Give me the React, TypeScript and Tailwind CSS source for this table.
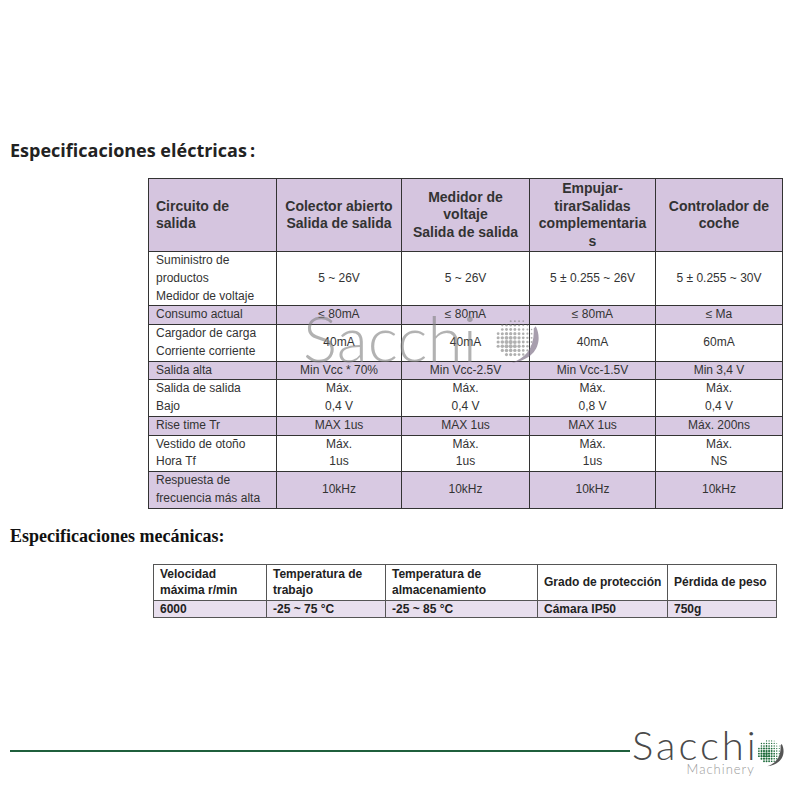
import React from "react";

type Cell = string[];

const elecHeader: Cell[] = [
  ["Circuito de", "salida"],
  ["Colector abierto", "Salida de salida"],
  ["Medidor de", "voltaje", "Salida de salida"],
  ["Empujar-", "tirarSalidas", "complementaria", "s"],
  ["Controlador de", "coche"],
];

const elecRows: { label: string[]; values: string[][]; tint: boolean }[] = [
  {
    label: ["Suministro de", "productos", "Medidor de voltaje"],
    values: [["5 ~ 26V"], ["5 ~ 26V"], ["5 ± 0.255 ~ 26V"], ["5 ± 0.255 ~ 30V"]],
    tint: false,
  },
  {
    label: ["Consumo actual"],
    values: [["≤ 80mA"], ["≤ 80mA"], ["≤ 80mA"], ["≤ Ma"]],
    tint: true,
  },
  {
    label: ["Cargador de carga", "Corriente corriente"],
    values: [["40mA"], ["40mA"], ["40mA"], ["60mA"]],
    tint: false,
  },
  {
    label: ["Salida alta"],
    values: [["Min Vcc * 70%"], ["Min Vcc-2.5V"], ["Min Vcc-1.5V"], ["Min 3,4 V"]],
    tint: true,
  },
  {
    label: ["Salida de salida", "Bajo"],
    values: [["Máx.", "0,4 V"], ["Máx.", "0,4 V"], ["Máx.", "0,8 V"], ["Máx.", "0,4 V"]],
    tint: false,
  },
  {
    label: ["Rise time Tr"],
    values: [["MAX 1us"], ["MAX 1us"], ["MAX 1us"], ["Máx. 200ns"]],
    tint: true,
  },
  {
    label: ["Vestido de otoño", "Hora Tf"],
    values: [["Máx.", "1us"], ["Máx.", "1us"], ["Máx.", "1us"], ["Máx.", "NS"]],
    tint: false,
  },
  {
    label: ["Respuesta de", "frecuencia más alta"],
    values: [["10kHz"], ["10kHz"], ["10kHz"], ["10kHz"]],
    tint: true,
  },
];

const mechHeader = [
  ["Velocidad", "máxima r/min"],
  ["Temperatura de", "trabajo"],
  ["Temperatura de", "almacenamiento"],
  ["Grado de protección"],
  ["Pérdida de peso"],
];
const mechValues = ["6000", "-25 ~ 75 °C", "-25 ~ 85 °C", "Cámara IP50", "750g"];

function Lines({ lines }: { lines: string[] }) {
  return (
    <>
      {lines.map((l, i) => (
        <div key={i}>{l}</div>
      ))}
    </>
  );
}

// halftone ball used in the Sacchi logo
function HalftoneBall({ dot, swoosh, size }: { dot: string; swoosh: string; size: number }) {
  const dots: { x: number; y: number; r: number }[] = [];
  for (let y = 3; y < 40; y += 4) {
    for (let x = 3; x < 40; x += 4) {
      const dx = x - 20;
      const dy = y - 20;
      if (dx * dx + dy * dy > 18.5 * 18.5) continue;
      const d = Math.sqrt((x - 14) * (x - 14) + (y - 24) * (y - 24));
      const r = Math.max(0.7, 2.1 - d * 0.055);
      dots.push({ x, y, r });
    }
  }
  return (
    <svg width={size} height={size} viewBox="0 0 44 44" className="block">
      {dots.map((p, i) => (
        <circle key={i} cx={p.x} cy={p.y} r={p.r} fill={dot} />
      ))}
      <path d="M39 8 C46 22 40 40 16 43 C30 38 38 28 37 10 Z" fill={swoosh} />
    </svg>
  );
}

export default function App() {
  return (
    <div className="relative h-[800px] w-[800px] overflow-hidden bg-white text-[#333]">
      <h2 className="ml-[10px] pt-[136px] font-['Open_Sans',sans-serif] text-[18px] font-bold leading-[28px] text-[#222]">
        Especificaciones eléctricas<span className="ml-[3px]">:</span>
      </h2>

      <table className="ml-[148px] mt-[14px] w-[634px] table-fixed border-collapse font-['Liberation_Sans',Arial,sans-serif] text-[12px] leading-[17.75px]">
        <colgroup>
          <col className="w-[128px]" />
          <col className="w-[125px]" />
          <col className="w-[128px]" />
          <col className="w-[126px]" />
          <col className="w-[127px]" />
        </colgroup>
        <thead>
          <tr className="h-[73px] bg-[#d5c5df]">
            {elecHeader.map((h, i) => (
              <th
                key={i}
                className={`border border-[#333] px-[4px] align-middle text-[14px] font-bold leading-[17.5px] text-[#333] ${
                  i === 0 ? "pl-[7px] text-left" : "text-center"
                }`}
              >
                <Lines lines={h} />
              </th>
            ))}
          </tr>
        </thead>
        <tbody>
          {elecRows.map((row, ri) => (
            <tr key={ri} className={row.tint ? "bg-[#d8c9e2]" : "bg-white"}>
              <td className="border border-[#333] px-[7px] py-0 text-left align-middle">
                <Lines lines={row.label} />
              </td>
              {row.values.map((v, vi) => (
                <td key={vi} className="border border-[#333] px-[4px] py-0 text-center align-middle">
                  <Lines lines={v} />
                </td>
              ))}
            </tr>
          ))}
        </tbody>
      </table>

      <h2 className="ml-[10px] mt-[15px] font-['Liberation_Serif',serif] text-[18px] font-bold leading-[24px] text-[#111]">
        Especificaciones mecánicas:
      </h2>

      <table className="ml-[153px] mt-[16px] w-[623px] table-fixed border-collapse font-['Liberation_Sans',Arial,sans-serif] text-[12px] font-bold leading-[16px] text-[#222]">
        <colgroup>
          <col className="w-[113px]" />
          <col className="w-[119px]" />
          <col className="w-[152px]" />
          <col className="w-[130px]" />
          <col className="w-[109px]" />
        </colgroup>
        <tbody>
          <tr className="h-[36px] bg-white">
            {mechHeader.map((h, i) => (
              <td key={i} className="whitespace-nowrap border-[1.5px] border-[#555] px-[6px] py-0 align-middle">
                <Lines lines={h} />
              </td>
            ))}
          </tr>
          <tr className="h-[17px] bg-[#e8dfee]">
            {mechValues.map((v, i) => (
              <td key={i} className="border-[1.5px] border-[#555] px-[6px] py-0 align-middle">
                {v}
              </td>
            ))}
          </tr>
        </tbody>
      </table>

      {/* watermark over the table */}
      <div className="pointer-events-none absolute left-[303px] top-[298px] flex items-center opacity-60">
        <span className="font-['Lato',sans-serif] text-[64px] font-light leading-[80px] text-[#808080]">
          Sacchi
        </span>
        <div className="ml-[18px] mt-[6px]">
          <HalftoneBall dot="#7d7d7d" swoosh="#6e5f78" size={46} />
        </div>
      </div>

      {/* footer */}
      <div className="absolute left-[10px] top-[725px] flex w-[785px] items-center">
        <div className="h-[2px] w-[620px] bg-[#1f5f3c]" />
        <div className="ml-[2px] flex flex-col items-end">
          <span className="font-['Lato',sans-serif] text-[40px] font-light leading-[40px] tracking-[3px] text-[#4a4a4a]">
            Sacchi
          </span>
          <span className="-mt-[2px] mr-[4px] font-['Lato',sans-serif] text-[13px] font-light leading-[13px] tracking-[1px] text-[#999]">
            Machinery
          </span>
        </div>
        <div className="-ml-[2px] mt-[4px]">
          <HalftoneBall dot="#1d6b3a" swoosh="#555" size={28} />
        </div>
      </div>
    </div>
  );
}
